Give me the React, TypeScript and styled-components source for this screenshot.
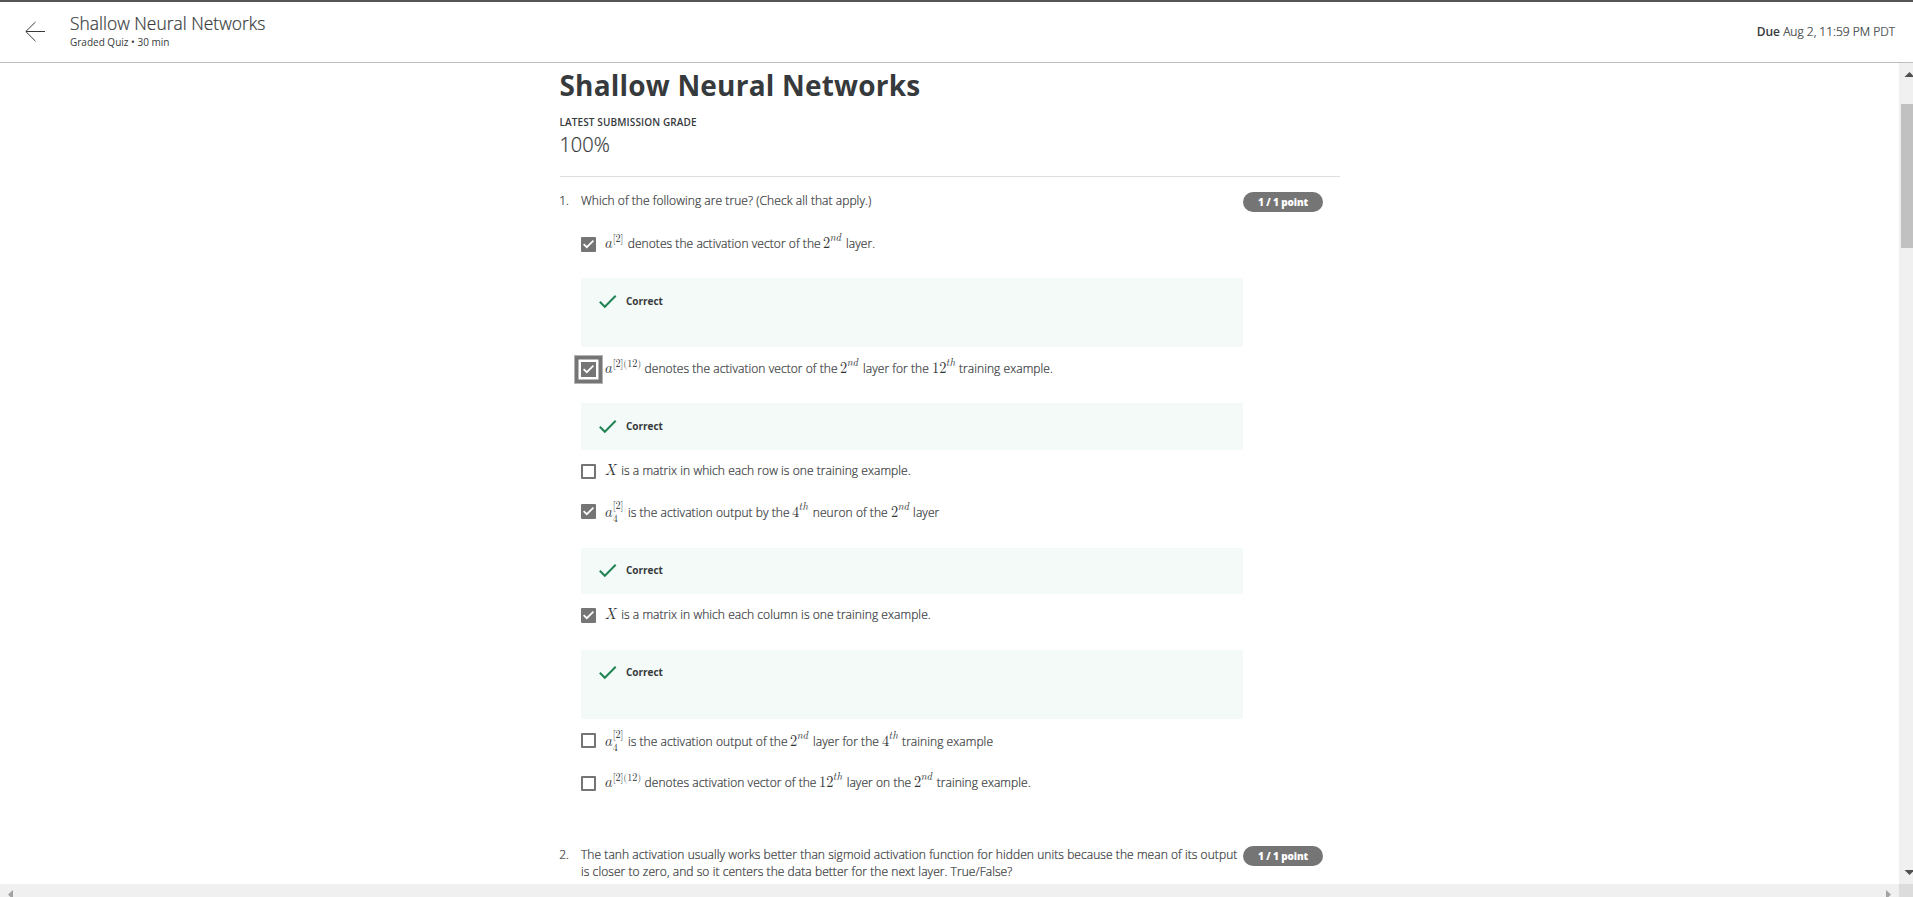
import React from 'react';
import styled, { createGlobalStyle, css } from 'styled-components';

const GlobalStyle = createGlobalStyle`
  * { box-sizing: border-box; }
  body {
    margin: 0;
    overflow: hidden;
    background: #fff;
    color: #373a3c;
    font-family: 'Open Sans', 'Noto Sans', sans-serif;
    font-size: 12px;
    line-height: 17px;
  }
`;

/* Light cut with a hairline stroke: sits between the 300 and 400 weights. */
const bookWeight = css`
  font-weight: 300;
  letter-spacing: 0.064px;
  -webkit-text-stroke: 0.22px currentColor;
`;

const Page = styled.div`
  display: flex;
  flex-direction: column;
  width: 100vw;
  height: 100vh;
  overflow: hidden;
`;

const Header = styled.header`
  display: flex;
  flex: none;
  height: 63px;
  padding: 9px 18px 0 25px;
  border-top: 2px solid #565454;
  border-bottom: 1px solid #bdbdbd;
`;

const BackIcon = styled.svg`
  width: 21px;
  height: 22px;
  margin: 10px 24px 0 0;
  fill: none;
  stroke: #373a3c;
  stroke-width: 1;
`;

const HeaderTitles = styled.div`
  flex: 1;
`;

const HeaderTitle = styled.div`
  ${bookWeight}
  font-size: 17.4px;
  line-height: 24px;
  letter-spacing: 0.02px;
`;

const HeaderMeta = styled.div`
  font-size: 10px;
  line-height: 14px;
`;

const DueDate = styled.div`
  ${bookWeight}
  margin-top: 12px;
  letter-spacing: 0;
`;

const DueLabel = styled.span`
  font-weight: 600;
  -webkit-text-stroke: 0;
`;

const Body = styled.div`
  display: flex;
  flex: 1;
  min-height: 0;
`;

const Viewport = styled.main`
  flex: 1;
  min-width: 0;
  padding: 3px 0 0 560px;
  overflow: hidden;
`;

const Content = styled.div`
  width: 780px;
`;

const QuizTitle = styled.h1`
  margin: 0 0 0 -0.6px;
  font-size: 28px;
  font-weight: 700;
  line-height: 38px;
  letter-spacing: 0.2px;
`;

const GradeLabel = styled.div`
  margin: 11px 0 0 -0.6px;
  font-size: 10px;
  font-weight: 600;
  line-height: 14px;
  letter-spacing: 0.13px;
`;

const Grade = styled.div`
  ${bookWeight}
  height: 46px;
  margin: 1px 0 0 -0.6px;
  padding-top: 1px;
  font-size: 20px;
  line-height: 27px;
  letter-spacing: 0;
`;

const QuestionList = styled.div`
  border-top: 1px solid #dedede;
`;

const Question = styled.section<{ $space: number }>`
  display: grid;
  grid-template-columns: 21px 662px 80px;
  align-items: start;
  margin-top: ${(p) => p.$space}px;
`;

const QuestionNumber = styled.div`
  ${bookWeight}
  margin-left: -0.8px;
`;

const Prompt = styled.div`
  ${bookWeight}
`;

const Points = styled.div`
  height: 20px;
  border-radius: 10px;
  background: #757575;
  color: #fff;
  font-size: 10px;
  font-weight: 800;
  line-height: 20px;
  letter-spacing: -0.1px;
  text-align: center;
`;

const OptionRow = styled.label<{ $space: number }>`
  display: flex;
  height: 15px;
  margin-top: ${(p) => p.$space}px;
`;

const Box = styled.span<{ $checked?: boolean; $focused?: boolean }>`
  display: flex;
  flex: none;
  width: 15px;
  height: 15px;
  margin-right: 9px;
  border: 2px solid #757575;
  border-radius: 1px;
  background: ${(p) => (p.$checked ? '#757575' : '#fff')};
  ${(p) =>
    p.$focused &&
    css`
      border-radius: 0;
      box-shadow: 0 0 0 2.5px #fff, 0 0 0 6px #757575, 0 0 0 7px #b5b5b5;
    `}
`;

const BoxTick = styled.svg`
  width: 11px;
  height: 11px;
  fill: none;
  stroke: #fff;
  stroke-width: 1.7;
`;

const OptionText = styled.span<{ $low?: boolean }>`
  ${bookWeight}
  margin-top: ${(p) => (p.$low ? 0 : -2)}px;
  height: 17px;
  white-space: nowrap;
`;

const Formula = styled.span<{ $width: number; $lead?: boolean }>`
  display: inline-block;
  width: ${(p) => p.$width}px;
  margin: -14px 0 -14px ${(p) => (p.$lead ? 0 : 2.8)}px;
  color: #303335;
  font-family: 'Latin Modern Math', 'Liberation Serif', serif;
  font-size: 15.5px;
  font-weight: 400;
  letter-spacing: 0;
  -webkit-text-stroke: 0;
  transform: scaleX(0.93);
  transform-origin: left;

  math {
    font-family: inherit;
    font-size: inherit;
  }
`;

const FeedbackPanel = styled.div<{ $space: number; $height: number; $inset: number }>`
  display: flex;
  height: ${(p) => p.$height}px;
  margin-top: ${(p) => p.$space}px;
  padding: ${(p) => p.$inset}px 0 0 17.5px;
  background: #f4faf8;
`;

const FeedbackTick = styled.svg`
  width: 18px;
  height: 14px;
  margin-right: 9.4px;
  fill: none;
  stroke: #1f8354;
  stroke-width: 2;
`;

const FeedbackText = styled.span`
  margin-top: -1px;
  font-size: 10px;
  font-weight: 700;
  line-height: 14px;
`;

const VerticalBar = styled.div`
  display: flex;
  flex-direction: column;
  flex: none;
  width: 14px;
  padding: 9px 0 9px 2px;
  background: #f0f0f0;
  overflow: hidden;
`;

const VerticalThumb = styled.div`
  height: 144px;
  margin: 27px 0 auto;
  background: #c1c1c1;
`;

const BarArrow = styled.svg<{ $color: string }>`
  flex: none;
  fill: ${(p) => p.$color};
`;

const HorizontalBar = styled.div`
  display: flex;
  flex: none;
  height: 13px;
  padding: 6px 0 0 8px;
  background: #f0f0f0;
`;

const BarCorner = styled.div`
  width: 14px;
  height: 13px;
  margin: -6px 0 0 8px;
  background: #dcdcdc;
`;

const BarTrack = styled.div`
  flex: 1;
`;

/* Superscripted symbol such as 2^{nd} or 12^{th}. */
const Ordinal = ({ n, suffix, width }: { n: string; suffix: string; width: number }) => (
  <Formula $width={width}>
    <math>
      <msup>
        <mn>{n}</mn>
        <mrow>
          {suffix.split('').map((c) => (
            <mi key={c}>{c}</mi>
          ))}
        </mrow>
      </msup>
    </math>
  </Formula>
);

const Index = ({ children }: { children: string }) => <mn>{children}</mn>;

const LayerVector = () => (
  <Formula $width={22.7} $lead>
    <math>
      <msup>
        <mi>a</mi>
        <Index>[2]</Index>
      </msup>
    </math>
  </Formula>
);

const ExampleVector = () => (
  <Formula $width={39.6} $lead>
    <math>
      <msup>
        <mi>a</mi>
        <Index>[2](12)</Index>
      </msup>
    </math>
  </Formula>
);

const NeuronOutput = () => (
  <Formula $width={22.9} $lead>
    <math>
      <msubsup>
        <mi>a</mi>
        <Index>4</Index>
        <Index>[2]</Index>
      </msubsup>
    </math>
  </Formula>
);

const Matrix = () => (
  <Formula $width={16.2} $lead>
    <math>
      <mi>X</mi>
    </math>
  </Formula>
);

type OptionProps = {
  space: number;
  checked?: boolean;
  focused?: boolean;
  low?: boolean;
  children: React.ReactNode;
};

const Option = ({ space, checked, focused, low, children }: OptionProps) => (
  <OptionRow $space={space}>
    <Box $checked={checked} $focused={focused}>
      {checked && (
        <BoxTick viewBox="0 0 11 11">
          <path d="M0.6 5.2 L3.8 8.2 L10.4 1.6" />
        </BoxTick>
      )}
    </Box>
    <OptionText $low={low}>{children}</OptionText>
  </OptionRow>
);

const Feedback = ({ space, height, inset }: { space: number; height: number; inset: number }) => (
  <FeedbackPanel $space={space} $height={height} $inset={inset}>
    <FeedbackTick viewBox="0 0 18 14">
      <path d="M0.8 6.8 L5.8 11.8 L16.7 0.8" />
    </FeedbackTick>
    <FeedbackText>Correct</FeedbackText>
  </FeedbackPanel>
);

export default function App() {
  return (
    <Page>
      <GlobalStyle />
      <Header>
        <BackIcon viewBox="0 0 21 22">
          <path d="M10.5 1 L0.8 10.5 L10.5 20.2 M1 10.5 H20" />
        </BackIcon>
        <HeaderTitles>
          <HeaderTitle>Shallow Neural Networks</HeaderTitle>
          <HeaderMeta>Graded Quiz • 30 min</HeaderMeta>
        </HeaderTitles>
        <DueDate>
          <DueLabel>Due</DueLabel> Aug 2, 11:59 PM PDT
        </DueDate>
      </Header>
      <Body>
        <Viewport>
          <Content>
            <QuizTitle>Shallow Neural Networks</QuizTitle>
            <GradeLabel>LATEST SUBMISSION GRADE</GradeLabel>
            <Grade>100%</Grade>
            <QuestionList>
              <Question $space={15}>
                <QuestionNumber>1.</QuestionNumber>
                <div>
                  <Prompt>Which of the following are true? (Check all that apply.)</Prompt>
                  <Option space={28} checked>
                    <LayerVector />denotes the activation vector of the
                    <Ordinal n="2" suffix="nd" width={22.6} />layer.
                  </Option>
                  <Feedback space={26} height={69} inset={17} />
                  <Option space={15} checked focused>
                    <ExampleVector />denotes the activation vector of the
                    <Ordinal n="2" suffix="nd" width={22.6} />layer for the
                    <Ordinal n="12" suffix="th" width={27.3} />training example.
                  </Option>
                  <Feedback space={26} height={47} inset={17} />
                  <Option space={14}>
                    <Matrix />is a matrix in which each row is one training example.
                  </Option>
                  <Option space={25} checked low>
                    <NeuronOutput />is the activation output by the
                    <Ordinal n="4" suffix="th" width={20.3} />neuron of the
                    <Ordinal n="2" suffix="nd" width={22.6} />layer
                  </Option>
                  <Feedback space={29} height={46} inset={16} />
                  <Option space={14} checked>
                    <Matrix />is a matrix in which each column is one training example.
                  </Option>
                  <Feedback space={27} height={69} inset={16} />
                  <Option space={14} low>
                    <NeuronOutput />is the activation output of the
                    <Ordinal n="2" suffix="nd" width={22.6} />layer for the
                    <Ordinal n="4" suffix="th" width={20.3} />training example
                  </Option>
                  <Option space={28}>
                    <ExampleVector />denotes activation vector of the
                    <Ordinal n="12" suffix="th" width={27.3} />layer on the
                    <Ordinal n="2" suffix="nd" width={22.6} />training example.
                  </Option>
                </div>
                <Points>1 / 1 point</Points>
              </Question>
              <Question $space={55}>
                <QuestionNumber>2.</QuestionNumber>
                <Prompt>
                  The tanh activation usually works better than sigmoid activation function for hidden units
                  because the mean of its output
                  <br />
                  is closer to zero, and so it centers the data better for the next layer. True/False?
                </Prompt>
                <Points>1 / 1 point</Points>
              </Question>
            </QuestionList>
          </Content>
        </Viewport>
        <VerticalBar>
          <BarArrow $color="#505050" width="14" height="5" viewBox="0 0 14 5">
            <path d="M3.5 5 L8.5 0 L13.5 5 Z" />
          </BarArrow>
          <VerticalThumb />
          <BarArrow $color="#505050" width="14" height="5" viewBox="0 0 14 5">
            <path d="M3.5 0 L8.5 5 L13.5 0 Z" />
          </BarArrow>
        </VerticalBar>
      </Body>
      <HorizontalBar>
        <BarArrow $color="#a3a3a3" width="5" height="7" viewBox="0 0 5 7">
          <path d="M5 0 L0 4.5 L2.5 7 H5 Z" />
        </BarArrow>
        <BarTrack />
        <BarArrow $color="#a3a3a3" width="5" height="7" viewBox="0 0 5 7">
          <path d="M0 0 L5 4.5 L2.5 7 H0 Z" />
        </BarArrow>
        <BarCorner />
      </HorizontalBar>
    </Page>
  );
}
